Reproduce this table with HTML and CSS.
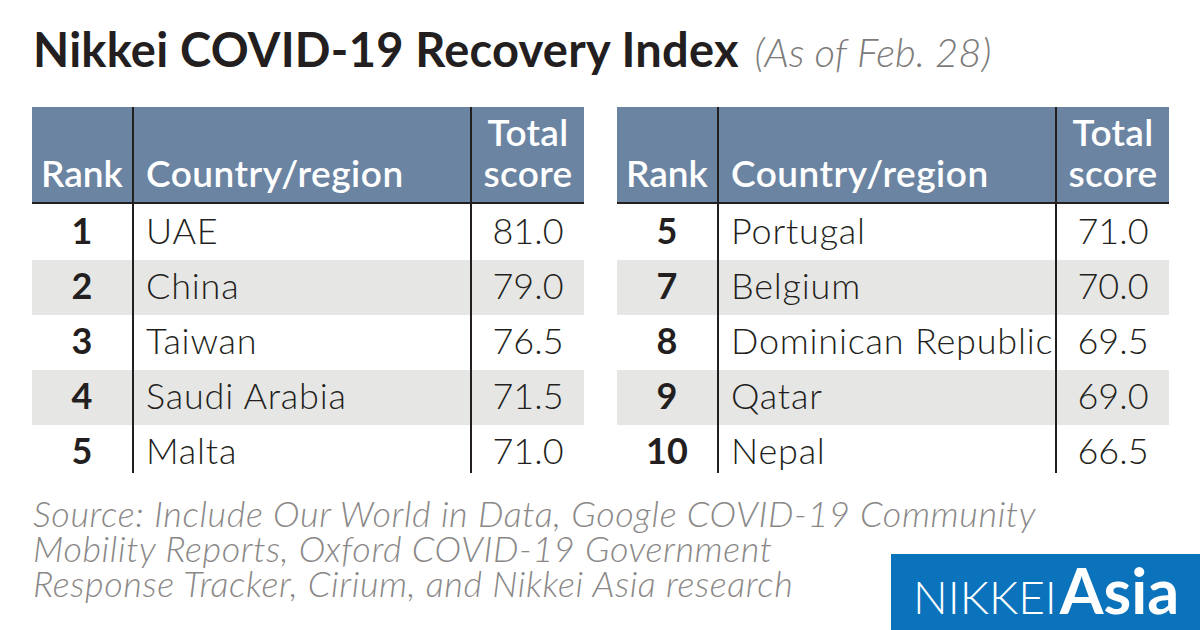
FILE: index.html
```html
<!DOCTYPE html>
<html lang="en">
<head>
<meta charset="utf-8">
<title>Nikkei COVID-19 Recovery Index</title>
<link rel="stylesheet" href="styles.css">
</head>
<body>
<div class="page">
  <h1 class="title">Nikkei COVID-19 Recovery Index <span class="date">(As of Feb. 28)</span></h1>

  <div class="tables">
    <div class="table-wrap">
      <table class="rank-table">
        <colgroup><col class="c-rank"><col class="c-country"><col class="c-score"></colgroup>
        <thead>
          <tr><th class="rank">Rank</th><th class="country">Country/region</th><th class="score">Total<br>score</th></tr>
        </thead>
        <tbody>
          <tr class="first"><td class="rank">1</td><td class="country">UAE</td><td class="score">81.0</td></tr>
          <tr class="alt"><td class="rank">2</td><td class="country">China</td><td class="score">79.0</td></tr>
          <tr><td class="rank">3</td><td class="country">Taiwan</td><td class="score">76.5</td></tr>
          <tr class="alt"><td class="rank">4</td><td class="country">Saudi Arabia</td><td class="score">71.5</td></tr>
          <tr><td class="rank">5</td><td class="country">Malta</td><td class="score">71.0</td></tr>
        </tbody>
      </table>
    </div>
    <div class="table-wrap">
      <table class="rank-table">
        <colgroup><col class="c-rank"><col class="c-country"><col class="c-score"></colgroup>
        <thead>
          <tr><th class="rank">Rank</th><th class="country">Country/region</th><th class="score">Total<br>score</th></tr>
        </thead>
        <tbody>
          <tr class="first"><td class="rank">5</td><td class="country">Portugal</td><td class="score">71.0</td></tr>
          <tr class="alt"><td class="rank">7</td><td class="country">Belgium</td><td class="score">70.0</td></tr>
          <tr><td class="rank">8</td><td class="country">Dominican Republic</td><td class="score">69.5</td></tr>
          <tr class="alt"><td class="rank">9</td><td class="country">Qatar</td><td class="score">69.0</td></tr>
          <tr><td class="rank">10</td><td class="country">Nepal</td><td class="score">66.5</td></tr>
        </tbody>
      </table>
    </div>
  </div>

  <div class="footer">
    <p class="source"><span class="line">Source: Include Our World in Data, Google COVID-19 Community</span><span class="line">Mobility Reports, Oxford COVID-19 Government</span><span class="line">Response Tracker, Cirium, and Nikkei Asia research</span></p>
    <div class="logo"><span class="logo-nikkei">NIKKEI</span><span class="logo-asia">Asia</span></div>
  </div>
</div>
</body>
</html>
```
FILE: styles.css
```css
html, body {
  margin: 0;
  padding: 0;
  background: #ffffff;
}

.page {
  width: 1200px;
  height: 630px;
  overflow: hidden;
  font-family: "Lato", "Noto Sans", sans-serif;
  color: #231f20;
}

.title {
  margin: 22px 0 0 33px;
  font-size: 47px;
  font-weight: 700;
  line-height: 55px;
  letter-spacing: 0.25px;
  white-space: nowrap;
}

.date {
  margin-left: 4px;
  font-size: 40px;
  font-weight: 300;
  font-style: italic;
  letter-spacing: 0;
  color: #7d7b7a;
}

.tables {
  display: flex;
  gap: 33px;
  margin: 27px 0 0 32px;
}

.table-wrap {
  width: 552px;
  height: 366px;
  overflow: hidden;
}

.rank-table {
  width: 552px;
  table-layout: fixed;
  border-collapse: collapse;
  border-spacing: 0;
  font-size: 36px;
}

.c-rank { width: 101px; }
.c-country { width: 338px; }
.c-score { width: 113px; }

.rank-table th,
.rank-table td {
  padding: 0;
  border-left: 2px solid #231f20;
  white-space: nowrap;
  overflow: visible;
}

.rank-table th:first-child,
.rank-table td:first-child {
  border-left: none;
}

.rank-table thead tr {
  background: #6b84a2;
  border-bottom: 2px solid #231f20;
}

.rank-table th {
  height: 96px;
  vertical-align: bottom;
  padding-bottom: 9px;
  color: #ffffff;
  font-size: 37px;
  font-weight: 600;
  line-height: 41px;
  box-sizing: border-box;
}

.rank-table th.rank { text-align: center; letter-spacing: 0; }
.rank-table th.country { text-align: left; padding-left: 12px; letter-spacing: 0.5px; }
.rank-table th.score { text-align: center; letter-spacing: 0.3px; }

.rank-table td {
  height: 55px;
  vertical-align: middle;
  line-height: 40px;
  padding-bottom: 5px;
  box-sizing: border-box;
}

.rank-table tr.first td {
  height: 57px;
}

.rank-table tr.alt {
  background: #e6e6e5;
}

.rank-table td.rank {
  text-align: center;
  font-weight: 700;
}

.rank-table td.country {
  text-align: left;
  padding-left: 12px;
  font-weight: 300;
  letter-spacing: 0.8px;
}

.rank-table td.score {
  text-align: center;
  font-weight: 300;
  letter-spacing: 0;
}

.footer {
  display: grid;
  height: 135px;
  margin-top: 23px;
}

.footer > * {
  grid-area: 1 / 1;
}

.source {
  margin: 0 0 0 33px;
  align-self: start;
  display: flex;
  flex-direction: column;
  font-size: 36px;
  line-height: 35px;
  font-weight: 300;
  font-style: italic;
  letter-spacing: 0.6px;
  color: #8a8887;
  white-space: nowrap;
}

.line {
  display: block;
  height: 35px;
}

.logo {
  justify-self: end;
  align-self: end;
  width: 309px;
  height: 77px;
  box-sizing: border-box;
  padding: 4px 0 0 22px;
  background: #0b73bc;
  color: #ffffff;
  display: flex;
  align-items: baseline;
  gap: 3px;
}

.logo-nikkei {
  font-size: 46px;
  line-height: 1;
  font-weight: 300;
  letter-spacing: 0;
}

.logo-asia {
  font-size: 63px;
  line-height: 1;
  font-weight: 700;
}
```
